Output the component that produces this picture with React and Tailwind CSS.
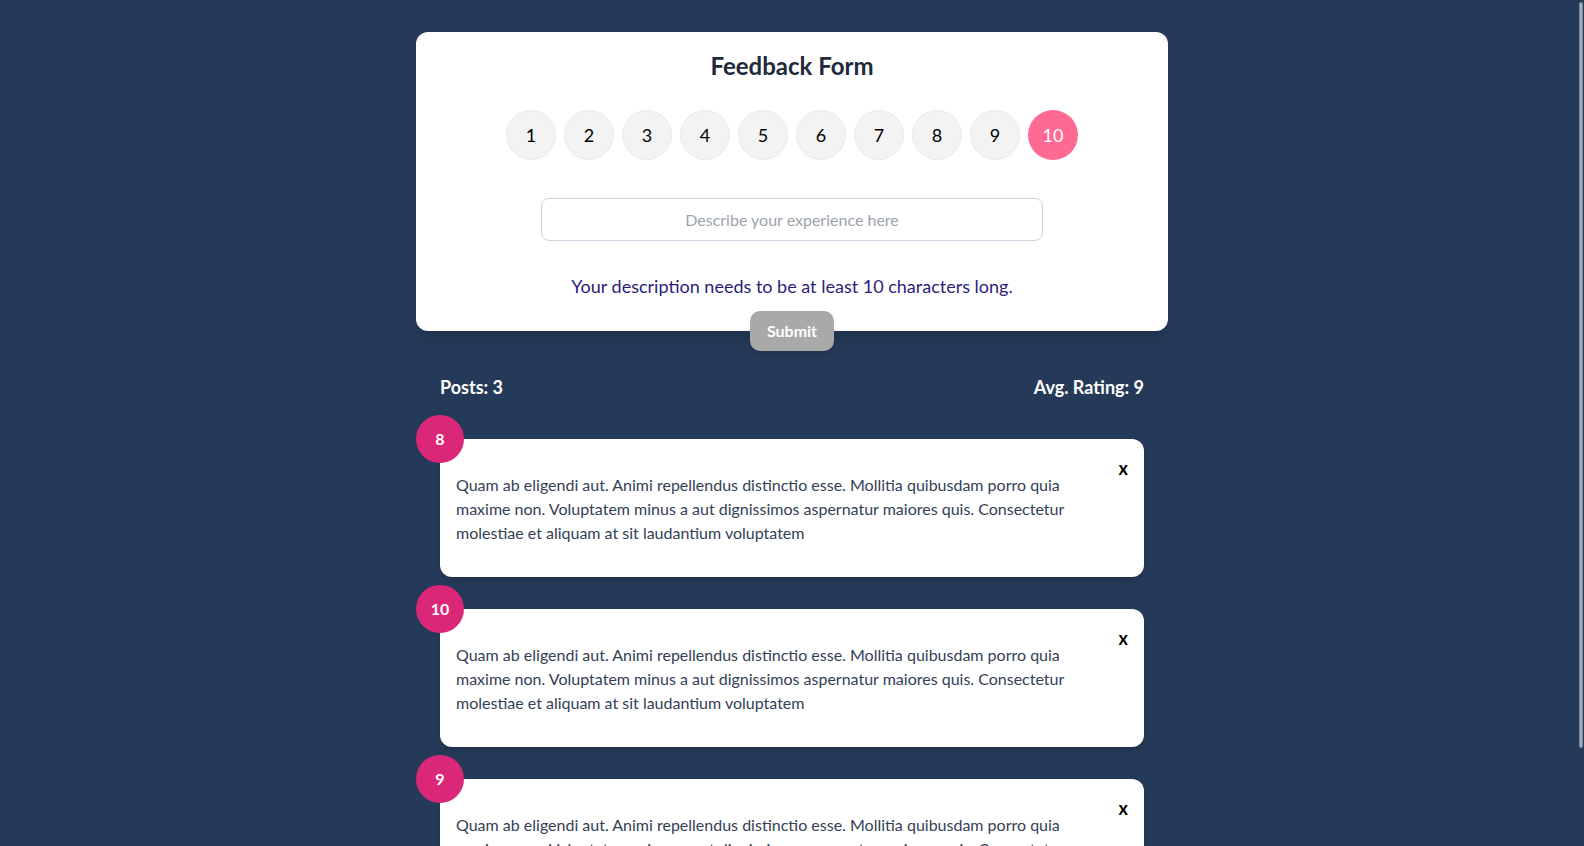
import React, { useState } from "react";

const text =
  "Quam ab eligendi aut. Animi repellendus distinctio esse. Mollitia quibusdam porro quia maxime non. Voluptatem minus a aut dignissimos aspernatur maiores quis. Consectetur molestiae et aliquam at sit laudantium voluptatem";

export default function App() {
  const [selected, setSelected] = useState(10);
  const posts = [
    { id: 1, rating: 8, text },
    { id: 2, rating: 10, text },
    { id: 3, rating: 9, text },
  ];
  return (
    <div
      className="min-h-screen bg-[#253a59] pt-8 pb-10"
      style={{ fontFamily: "Lato, 'Open Sans', sans-serif" }}
    >
      <div className="fixed top-[2px] right-[1px] h-[746px] w-[4px] rounded-sm border border-[#7f8ca0] bg-[#a3adbd]" />
      <div className="mx-auto w-[752px]">
        <div className="relative rounded-xl bg-white pt-[18px] pb-[31px] shadow-lg">
          <h1 className="text-center text-2xl font-bold leading-8 text-[#1e293b]">Feedback Form</h1>
          <div className="mt-[28px] flex justify-center gap-2">
            {[1, 2, 3, 4, 5, 6, 7, 8, 9, 10].map((n) => (
              <button
                key={n}
                onClick={() => setSelected(n)}
                className={
                  n === selected
                    ? "flex h-[50px] w-[50px] items-center justify-center rounded-full bg-[#ff6a93] text-lg text-white"
                    : "flex h-[50px] w-[50px] items-center justify-center rounded-full border border-[#eaeaea] bg-[#f3f3f3] text-lg text-black"
                }
              >
                {n}
              </button>
            ))}
          </div>
          <div className="mt-[38px] flex justify-center">
            <input
              type="text"
              placeholder="Describe your experience here"
              className="h-[43px] w-[502px] rounded-lg border border-[#ccd3e0] px-3 text-center text-base text-[#334155] placeholder:text-[#9ca3af] outline-none"
            />
          </div>
          <p className="mt-[31px] text-center text-lg text-[#2c1d7a]">
            Your description needs to be at least 10 characters long.
          </p>
          <button className="absolute bottom-0 left-1/2 h-10 w-[84px] -translate-x-1/2 translate-y-1/2 rounded-[10px] bg-[#a9a9a9] text-base font-bold text-white shadow-md">
            Submit
          </button>
        </div>

        <div className="px-6">
          <div className="mt-[42px] flex items-center justify-between text-lg font-bold leading-7 text-white">
            <span>Posts: {posts.length}</span>
            <span>Avg. Rating: 9</span>
          </div>
          <div className="mt-[38px] flex flex-col gap-8">
            {posts.map((p) => (
              <div key={p.id} className="relative rounded-xl bg-white px-4 pt-[34px] pb-8 shadow-md">
                <div className="absolute -top-6 -left-6 flex h-12 w-12 items-center justify-center rounded-full bg-[#db2777] text-base font-bold text-white">
                  {p.rating}
                </div>
                <button className="absolute top-[20px] right-4 text-lg font-bold leading-none text-black">x</button>
                <p className="max-w-[630px] text-base leading-6 text-[#334155]">{p.text}</p>
              </div>
            ))}
          </div>
        </div>
      </div>
    </div>
  );
}
